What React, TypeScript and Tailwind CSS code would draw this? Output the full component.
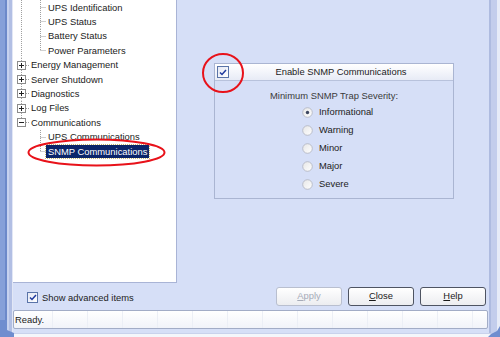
import React from "react";

type Row = {
  label: string;
  level: 0 | 1;
  box?: "+" | "-";
  parentCont?: boolean;
  last?: boolean;
  selected?: boolean;
};

const rows: Row[] = [
  { label: "UPS Identification", level: 1, parentCont: true },
  { label: "UPS Status", level: 1, parentCont: true },
  { label: "Battery Status", level: 1, parentCont: true },
  { label: "Power Parameters", level: 1, parentCont: true, last: true },
  { label: "Energy Management", level: 0, box: "+" },
  { label: "Server Shutdown", level: 0, box: "+" },
  { label: "Diagnostics", level: 0, box: "+" },
  { label: "Log Files", level: 0, box: "+" },
  { label: "Communications", level: 0, box: "-", last: true },
  { label: "UPS Communications", level: 1 },
  { label: "SNMP Communications", level: 1, last: true, selected: true },
];

const dot = { stroke: "#a0a0a0", strokeWidth: 1, strokeDasharray: "1 1" };

const Gutter = ({ row }: { row: Row }) => {
  if (row.level === 0) {
    return (
      <svg width="16" height="14.4" className="shrink-0">
        <line x1="8.5" y1="0" x2="8.5" y2="3" {...dot} />
        {!row.last && <line x1="8.5" y1="12" x2="8.5" y2="14.4" {...dot} />}
        <line x1="13" y1="7.5" x2="16" y2="7.5" {...dot} />
        <rect x="4.5" y="3.5" width="8" height="8" fill="#fff" stroke="#8c8c8c" />
        <line x1="6" y1="7.5" x2="11" y2="7.5" stroke="#222" />
        {row.box === "+" && <line x1="8.5" y1="5" x2="8.5" y2="10" stroke="#222" />}
      </svg>
    );
  }
  return (
    <svg width="33" height="14.4" className="shrink-0">
      {row.parentCont && <line x1="8.5" y1="0" x2="8.5" y2="14.4" {...dot} />}
      <line x1="27.5" y1="0" x2="27.5" y2={row.last ? 7.5 : 14.4} {...dot} />
      <line x1="27.5" y1="7.5" x2="33" y2="7.5" {...dot} />
    </svg>
  );
};

const CheckBox = ({ size = 12 }: { size?: number }) => (
  <span
    className="flex shrink-0 items-center justify-center border border-[#5a74a8] bg-gradient-to-br from-[#e4e8f4] to-white"
    style={{ width: size, height: size }}
  >
    <svg width="8" height="7" viewBox="0 0 8 7">
      <path d="M1 3.5 L3 5.5 L7 1" fill="none" stroke="#1f3a9e" strokeWidth="1.5" />
    </svg>
  </span>
);

const Radio = ({ on }: { on?: boolean }) => (
  <svg width="11" height="11" viewBox="0 0 11 11" className="shrink-0">
    <defs>
      <linearGradient id="rg" x1="0" y1="0" x2="1" y2="1">
        <stop offset="0" stopColor="#e6e6e6" />
        <stop offset="1" stopColor="#ffffff" />
      </linearGradient>
    </defs>
    <circle cx="5.5" cy="5.5" r="4.8" fill="url(#rg)" stroke="#b4b8c4" strokeWidth="0.9" />
    {on && <circle cx="5.5" cy="5.5" r="1.7" fill="#3c4660" />}
  </svg>
);

const Btn = ({ first, rest, disabled }: { first: string; rest: string; disabled?: boolean }) => (
  <button
    className={
      "flex h-[19px] w-[66px] items-center justify-center rounded-[3px] border bg-gradient-to-b from-white to-[#ecedf0] text-[9.4px] " +
      (disabled ? "border-[#b9bfcf] text-[#a6abb8]" : "border-[#4e5462] text-[#1a1a1a]")
    }
  >
    <span className="underline underline-offset-1">{first}</span>
    {rest}
  </button>
);

export default function App() {
  const levels = ["Informational", "Warning", "Minor", "Major", "Severe"];
  return (
    <div className="relative h-[337px] w-[500px] overflow-hidden bg-white font-['Liberation_Sans',Arial,sans-serif] text-[9.4px] text-[#222]">
      <div className="flex h-[333px]">
        {/* left frame */}
        <div className="flex w-[13px] shrink-0">
          <div className="w-[5px] bg-[#86a0d9]" />
          <div className="w-[2px] bg-[#6c89ca]" />
          <div className="w-[2px] bg-[#c7d2ef]" />
          <div className="w-[3px] bg-[#b2bfe4]" />
          <div className="w-[1px] bg-[#e2e7f6]" />
        </div>

        {/* main */}
        <div className="flex w-[476px] flex-col bg-[#d6dff7]">
          <div className="flex h-[283px]">
            <div className="w-[164px] shrink-0 border-r border-b border-[#a9b4d6] bg-white">
              {rows.map((r) => (
                <div key={r.label} className="flex h-[14.4px] items-center">
                  <Gutter row={r} />
                  <span
                    className={
                      "whitespace-nowrap px-[2px] leading-[13px] " +
                      (r.selected
                        ? "bg-[#0a246a] text-white outline outline-1 outline-dotted outline-[#c8b870]"
                        : "")
                    }
                  >
                    {r.label}
                  </span>
                </div>
              ))}
            </div>

            <div className="flex-1 pl-[37px] pt-[63px]">
              <div className="flex h-[136px] w-[240px] flex-col border border-[#aab5d2]">
                <div className="flex h-[17px] items-center border-b border-[#b8c2dc] bg-gradient-to-b from-white to-[#e7ebf6]">
                  <span className="ml-[2px]">
                    <CheckBox />
                  </span>
                  <span className="flex-1 text-center text-[#222]">Enable SNMP Communications</span>
                </div>
                <div className="pt-[8px] text-center leading-[14px] text-[#3a3a3a]">
                  Minimum SNMP Trap Severity:
                </div>
                <div className="flex flex-col pl-[87px]">
                  {levels.map((l, i) => (
                    <div key={l} className="flex h-[18px] items-center gap-[6px]">
                      <Radio on={i === 0} />
                      <span className="text-[#222]">{l}</span>
                    </div>
                  ))}
                </div>
              </div>
            </div>
          </div>

          <div className="flex h-[27px] items-center">
            <div className="ml-[14px] mt-[3px] flex items-center gap-[4px]">
              <CheckBox size={11} />
              <span className="text-[#222]">Show advanced items</span>
            </div>
            <div className="ml-auto mr-[3px] flex gap-[6px]">
              <Btn first="A" rest="pply" disabled />
              <Btn first="C" rest="lose" />
              <Btn first="H" rest="elp" />
            </div>
          </div>

          <div className="flex h-[19px] w-[475px] overflow-hidden rounded-[2px] border border-[#a2acc6] bg-gradient-to-b from-white to-[#f1f3f9]">
            <div className="flex w-[38px] shrink-0 items-center pl-[1px] pt-[1px] text-[#222]">Ready.</div>
            {Array.from({ length: 13 }).map((_, i) => (
              <div key={i} className="w-[35px] shrink-0 border-l border-[#eceff6]" />
            ))}
          </div>
        </div>

        {/* right frame */}
        <div className="flex w-[11px] shrink-0">
          <div className="w-[2px] bg-[#aebbe0]" />
          <div className="w-[6px] bg-[#c3cdec]" />
          <div className="w-[3px] bg-[#e6ebf8]" />
        </div>
      </div>
      <div className="h-[4px] border-t border-[#c9d2ec] bg-[#f4f6fb]" />

      {/* window corners */}
      <svg className="absolute left-0 top-[320px]" width="14" height="17">
        <path d="M0 0 L7 0 L7 10 L14 13 L14 17 L0 17 Z" fill="#6f8dcf" />
      </svg>
      <svg className="absolute right-0 top-[326px]" width="12" height="11">
        <path d="M12 0 L12 11 L0 11 L3 8 L9 5 Z" fill="#6f8dcf" />
      </svg>

      {/* red annotations */}
      <svg className="pointer-events-none absolute left-0 top-0" width="500" height="337">
        <ellipse cx="223" cy="73" rx="20" ry="19" fill="none" stroke="#e8121a" strokeWidth="2" />
        <ellipse cx="96.5" cy="152.5" rx="68" ry="13" fill="none" stroke="#e8121a" strokeWidth="2" />
      </svg>
    </div>
  );
}
